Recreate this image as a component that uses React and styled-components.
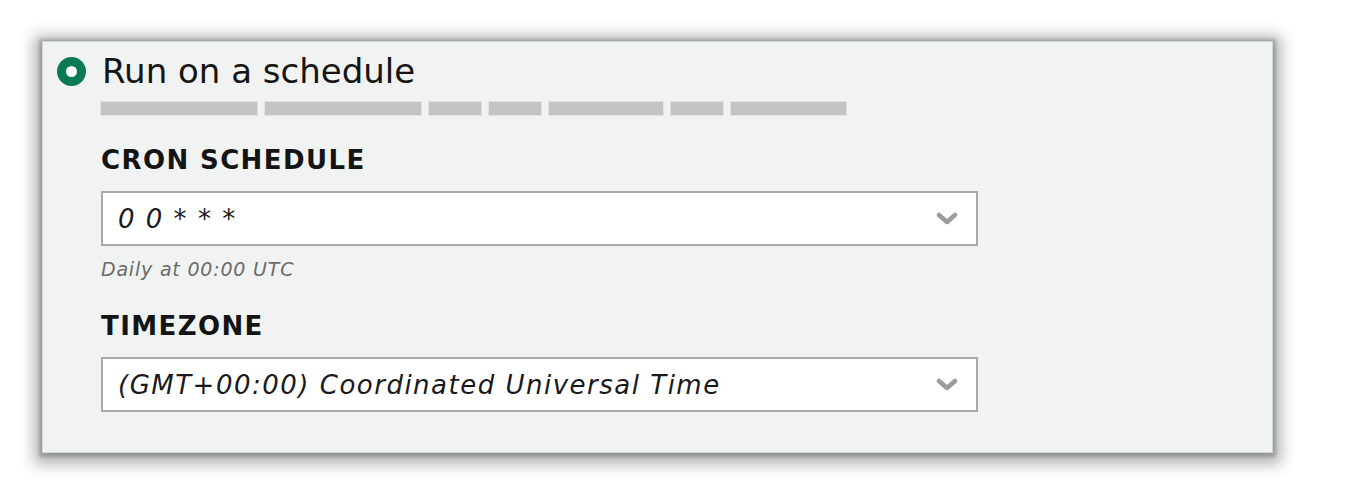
import React from 'react';
import styled, { createGlobalStyle } from 'styled-components';

const GlobalStyle = createGlobalStyle`
  html, body {
    margin: 0;
    padding: 0;
    background: #ffffff;
  }
  body {
    font-family: 'DejaVu Sans', 'Noto Sans', sans-serif;
    color: #141414;
  }
`;

const bars = [156, 156, 52, 52, 114, 52, 115];

const App = () => (
  <>
    <GlobalStyle />
    <Page>
      <Card>
        <Header>
          <Radio />
          <Title>Run on a schedule</Title>
        </Header>
        <Body>
          <Skeleton>
            {bars.map((w, i) => (
              <Bar key={i} style={{ width: w }} />
            ))}
          </Skeleton>

          <Field>
            <Label>CRON SCHEDULE</Label>
            <Select>
              <SelectValue>0 0 * * *</SelectValue>
              <Chevron />
            </Select>
            <Help>Daily at 00:00 UTC</Help>
          </Field>

          <Field $last>
            <Label>TIMEZONE</Label>
            <Select>
              <SelectValue>(GMT+00:00) Coordinated Universal Time</SelectValue>
              <Chevron />
            </Select>
          </Field>
        </Body>
      </Card>
    </Page>
  </>
);

const Chevron = () => (
  <ChevronSvg width="22" height="14" viewBox="0 0 22 14">
    <path
      d="M3 3 L11 10 L19 3"
      fill="none"
      stroke="#9b9b9b"
      strokeWidth="4.5"
      strokeLinecap="round"
      strokeLinejoin="round"
    />
  </ChevronSvg>
);

const Page = styled.div`
  padding: 41px 0 40px 42px;
`;

const Card = styled.div`
  box-sizing: border-box;
  width: 1231px;
  height: 412px;
  background: #f1f3f2;
  border: 1px solid #cfd8d8;
  box-shadow: 0 1px 3px 3px rgba(0, 0, 0, 0.18),
    0 3px 14px 8px rgba(0, 0, 0, 0.3);
  padding: 11px 0 0 14px;
`;

const Header = styled.div`
  display: flex;
  align-items: center;
  gap: 16px;
  height: 36px;
`;

const Radio = styled.span`
  box-sizing: border-box;
  width: 29px;
  height: 29px;
  border-radius: 50%;
  border: 9px solid #0a7a56;
  background: #ffffff;
  flex: none;
`;

const Title = styled.h1`
  margin: 0;
  font-size: 34px;
  font-weight: 400;
  line-height: 36px;
  color: #151515;
`;

const Body = styled.div`
  padding-left: 44px;
`;

const Skeleton = styled.div`
  display: flex;
  gap: 8px;
  margin-top: 13px;
`;

const Bar = styled.span`
  display: block;
  height: 13px;
  background: #c3c3c3;
  box-shadow: 0 0 0 1px #e2e2e2;
`;

const Field = styled.div`
  margin-top: ${(p) => (p.$last ? '31px' : '30px')};
`;

const Label = styled.div`
  font-size: 26px;
  font-weight: 700;
  line-height: 30px;
  letter-spacing: 1.4px;
  color: #141414;
`;

const Select = styled.div`
  box-sizing: border-box;
  display: flex;
  align-items: center;
  justify-content: space-between;
  width: 877px;
  height: 55px;
  margin-top: 16px;
  padding: 0 18px 0 15px;
  background: #ffffff;
  border: 2px solid #a9a9a9;
`;

const SelectValue = styled.span`
  font-size: 26px;
  font-style: italic;
  letter-spacing: 1.5px;
  color: #1a1a1a;
`;

const ChevronSvg = styled.svg`
  display: block;
`;

const Help = styled.div`
  margin-top: 12px;
  font-size: 19px;
  font-style: italic;
  letter-spacing: 0.8px;
  color: #6b6b6b;
`;

export default App;
